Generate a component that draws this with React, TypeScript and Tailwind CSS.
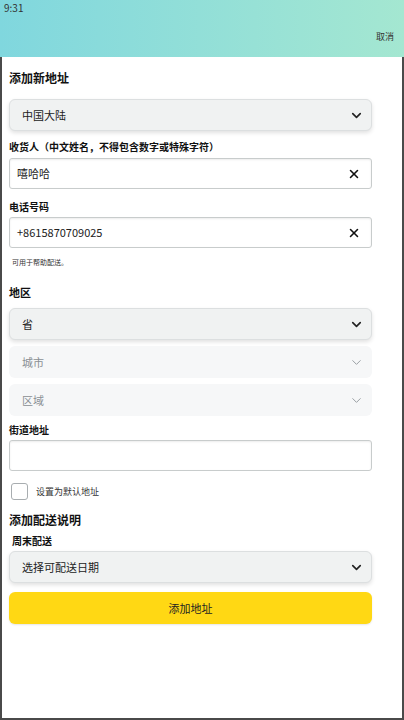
import { ChevronDown, X } from "lucide-react";

const font = { fontFamily: '"Noto Sans CJK SC", "Noto Sans", sans-serif' };

function Select({ text, muted }: { text: string; muted?: boolean }) {
  return (
    <div
      className={
        muted
          ? "flex h-[32px] items-center justify-between rounded-[6px] bg-[#f6f7f8] pl-[13px] pr-[8px]"
          : "flex h-[32px] items-center justify-between rounded-[6px] border border-[#dcdfe0] bg-[#f0f2f2] pl-[12px] pr-[7px] shadow-[0_2px_4px_rgba(0,0,0,0.12)]"
      }
    >
      <span className={muted ? "text-[11px] text-[#8a8f94]" : "text-[11px] text-[#222]"}>{text}</span>
      <ChevronDown
        size={15}
        strokeWidth={muted ? 1.6 : 2.6}
        className={muted ? "text-[#9aa0a4]" : "text-[#222]"}
      />
    </div>
  );
}

function Input({ value }: { value?: string }) {
  return (
    <div className="flex h-[31px] items-center justify-between rounded-[3px] border border-[#c8cccc] bg-white pl-[7px] pr-[10px] shadow-[0_1px_2px_rgba(0,0,0,0.08)_inset]">
      <span className="text-[11px] text-[#222]">{value}</span>
      {value && <X size={14} strokeWidth={2.6} className="text-[#111]" />}
    </div>
  );
}

export default function App() {
  return (
    <div className="flex h-[720px] w-[404px] flex-col bg-white" style={font}>
      <div className="h-[57px] shrink-0 bg-gradient-to-r from-[#80d7de] to-[#a4e7d1]">
        <div className="pl-[4px] pt-[1px] text-[10px] leading-[14px] text-[#333]">9:31</div>
        <div className="mt-[16px] pr-[10px] text-right text-[9px] leading-[12px] text-[#333]">取消</div>
      </div>
      <div className="flex flex-1 flex-col border-x-2 border-b-2 border-[#4a4a4a] px-[7px]">
        <div className="mt-[13px] text-[12px] font-bold leading-[16px] text-[#111]">添加新地址</div>
        <div className="mt-[13px] mr-[23px]">
          <Select text="中国大陆" />
        </div>
        <div className="mt-[9px] text-[10px] font-bold leading-[14px] text-[#111]">
          收货人（中文姓名，不得包含数字或特殊字符）
        </div>
        <div className="mt-[4px] mr-[23px]">
          <Input value="嘻哈哈" />
        </div>
        <div className="mt-[11px] text-[10px] font-bold leading-[14px] text-[#111]">电话号码</div>
        <div className="mt-[3px] mr-[23px]">
          <Input value="+8615870709025" />
        </div>
        <div className="mt-[9px] pl-[3px] text-[7px] leading-[10px] text-[#333]">可用于帮助配送。</div>
        <div className="mt-[18px] text-[11px] font-bold leading-[15px] text-[#111]">地区</div>
        <div className="mt-[8px] mr-[23px] flex flex-col gap-[6px]">
          <Select text="省" />
          <Select text="城市" muted />
          <Select text="区域" muted />
        </div>
        <div className="mt-[7px] text-[10px] font-bold leading-[14px] text-[#111]">街道地址</div>
        <div className="mt-[3px] mr-[23px]">
          <Input />
        </div>
        <div className="mt-[12px] flex items-center pl-[2px]">
          <div className="h-[17px] w-[17px] rounded-[3px] border-[1.5px] border-[#a8adb0] bg-white" />
          <span className="ml-[8px] text-[9px] leading-[12px] text-[#333]">设置为默认地址</span>
        </div>
        <div className="mt-[12px] text-[12px] font-bold leading-[16px] text-[#111]">添加配送说明</div>
        <div className="mt-[6px] pl-[3px] text-[10px] font-bold leading-[14px] text-[#111]">周末配送</div>
        <div className="mt-[3px] mr-[23px]">
          <Select text="选择可配送日期" />
        </div>
        <button className="mt-[9px] mr-[23px] flex h-[32px] items-center justify-center rounded-[6px] bg-[#ffd814] text-[11px] text-[#222] shadow-[0_1px_2px_rgba(0,0,0,0.1)]">
          添加地址
        </button>
      </div>
    </div>
  );
}
